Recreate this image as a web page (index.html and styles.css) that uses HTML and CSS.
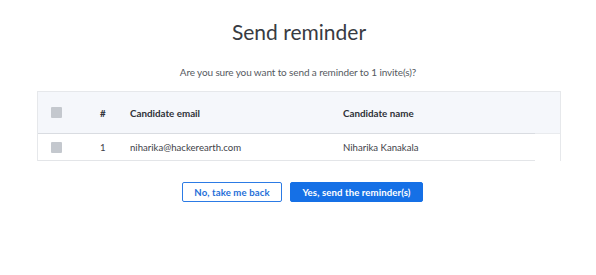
FILE: index.html
```html
<!DOCTYPE html>
<html>
<head>
<meta charset="utf-8">
<link rel="stylesheet" href="styles.css">
</head>
<body>
<div class="modal">
  <h1 class="title">Send reminder</h1>
  <p class="subtitle">Are you sure you want to send a reminder to 1 invite(s)?</p>
  <div class="table-box">
    <div class="thead">
      <div class="row head-row">
        <div class="cell c-check"><span class="checkbox"></span></div>
        <div class="cell c-num">#</div>
        <div class="cell c-email">Candidate email</div>
        <div class="cell c-name">Candidate name</div>
      </div>
    </div>
    <div class="row body-row">
      <div class="cell c-check"><span class="checkbox"></span></div>
      <div class="cell c-num">1</div>
      <div class="cell c-email">niharika@hackerearth.com</div>
      <div class="cell c-name">Niharika Kanakala</div>
    </div>
  </div>
  <div class="actions">
    <button class="btn btn-secondary">No, take me back</button>
    <button class="btn btn-primary">Yes, send the reminder(s)</button>
  </div>
</div>
</body>
</html>
```
FILE: styles.css
```css
* { box-sizing: border-box; }
html, body { margin: 0; padding: 0; background: #fff; }
body {
  font-family: "Lato", "Open Sans", sans-serif;
  color: #3b3e45;
  width: 596px;
  height: 275px;
  overflow: hidden;
}
.modal {
  display: flex;
  flex-direction: column;
  align-items: center;
  padding-top: 18px;
}
.title {
  margin: 0 0 0 2px;
  font-size: 21px;
  font-weight: 400;
  line-height: 28px;
  color: #383b42;
  letter-spacing: 0px;
}
.subtitle {
  margin: 19px 0 0;
  font-size: 10px;
  line-height: 14px;
  color: #565a61;
  letter-spacing: -0.12px;
}
.table-box {
  margin-top: 12px;
  width: 524px;
  margin-left: 2px;
  border: 1px solid #e6e8eb;
  border-bottom: none;
}
.thead {
  background: #f5f7fb;
  border-bottom: 1px solid #e9ebee;
}
.row {
  display: flex;
  align-items: center;
  width: 497px;
  font-size: 9.8px;
}
.head-row {
  height: 42px;
  margin-bottom: -1px;
  border-bottom: 1px solid #d9dce1;
  font-weight: 700;
  color: #2f3238;
}
.body-row {
  height: 27px;
  border-bottom: 1px solid #e3e5e8;
  color: #3e4148;
  font-size: 9.6px;
}
.cell { white-space: nowrap; }
.c-check { width: 62px; padding-left: 13px; display: flex; align-items: center; }
.c-num { width: 30px; padding-left: 0; }
.c-email { width: 213px; }
.c-name { flex: 1; }
.checkbox {
  display: block;
  width: 11px;
  height: 11px;
  background: #c4c8ce;
  border-radius: 1px;
}
.actions {
  display: flex;
  gap: 8px;
  margin-top: 21px;
  margin-left: 9px;
}
.btn {
  font-family: inherit;
  font-size: 9.6px;
  font-weight: 700;
  height: 20px;
  padding: 0;
  border-radius: 2px;
  cursor: pointer;
  white-space: nowrap;
  letter-spacing: 0.1px;
}
.btn-secondary {
  width: 100px;
  background: #fff;
  color: #1f6fd8;
  border: 1px solid #2c7be5;
}
.btn-primary {
  width: 133px;
  background: #1570e6;
  color: #fff;
  border: 1px solid #1570e6;
}
```
